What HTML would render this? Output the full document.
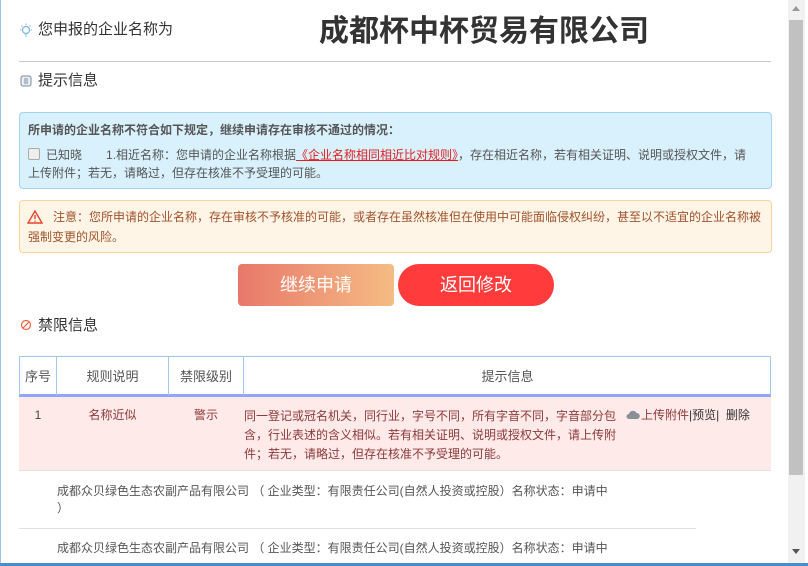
<!DOCTYPE html>
<html><head><meta charset="utf-8"><style>
*{margin:0;padding:0;box-sizing:border-box}
body{width:808px;height:566px;overflow:hidden;background:#fff;position:relative;font-family:"Liberation Sans","Noto Sans CJK SC","WenQuanYi Zen Hei",sans-serif;color:#333}
.a{position:absolute;white-space:nowrap}
.t{font-size:12px;line-height:17px;color:#555}
</style></head><body>
<div class="a" style="left:0;top:0;width:1px;height:566px;background:#9cc3e6"></div>
<div class="a" style="left:0;top:563px;width:808px;height:3px;background:#4a8ccc"></div>
<div class="a" style="left:788px;top:0;width:17px;height:563px;background:#f1f1f1"></div>
<div class="a" style="left:789px;top:20px;width:14px;height:455px;background:#c1c1c1"></div>
<div class="a" style="left:792px;top:6px;width:0;height:0;border-left:4px solid transparent;border-right:4px solid transparent;border-bottom:5px solid #999"></div>
<div class="a" style="left:792px;top:549px;width:0;height:0;border-left:4px solid transparent;border-right:4px solid transparent;border-top:5px solid #555"></div>

<svg class="a" style="left:19px;top:23px" width="14" height="16" viewBox="0 0 14 16"><circle cx="7" cy="7" r="3.5" fill="none" stroke="#7ab8e8" stroke-width="1.2"/><path d="M5.5 11h3M6 13h2M7 0.5v1.5M1 7h1.5M11.5 7H13M2.5 2.5l1 1M11.5 2.5l-1 1" stroke="#7ab8e8" stroke-width="1"/></svg>
<div class="a" style="left:38px;top:20px;font-size:15px;line-height:20px;color:#333">您申报的企业名称为</div>
<div class="a" style="left:319px;top:12px;font-size:30px;line-height:40px;font-weight:bold;color:#333">成都杯中杯贸易有限公司</div>
<div class="a" style="left:19px;top:61px;width:752px;height:1px;background:#c8c8c8"></div>
<svg class="a" style="left:20px;top:75px" width="12" height="12" viewBox="0 0 12 12"><rect x="1" y="1" width="10" height="10" rx="2" fill="#e8eef4" stroke="#7a8a9a"/><path d="M4 4h4M4 6h4M4 8h4" stroke="#7a8a9a"/></svg>
<div class="a" style="left:38px;top:70px;font-size:15px;line-height:21px;color:#333">提示信息</div>

<div class="a" style="left:19px;top:112px;width:753px;height:77px;background:#d9f1fc;border:1px solid #a2d4ef;border-radius:4px"></div>
<div class="a t" style="left:28px;top:122px;font-weight:bold;color:#555">所申请的企业名称不符合如下规定，继续申请存在审核不通过的情况：</div>
<div class="a" style="left:28px;top:148px;width:12px;height:12px;border:1px solid #aaa;border-radius:2px;background:#eee"></div>
<div class="a t" style="left:28px;top:146px;white-space:normal;width:726px;line-height:18px"><span style="margin-left:18px">已知晓</span><span style="margin-left:24px">1.相近名称：您申请的企业名称根据</span><span style="color:#e02020;text-decoration:underline">《企业名称相同相近比对规则》</span>，存在相近名称，若有相关证明、说明或授权文件，请上传附件；若无，请略过，但存在核准不予受理的可能。</div>

<div class="a" style="left:19px;top:200px;width:753px;height:53px;background:#fff5e6;border:1px solid #f8d59a;border-radius:4px"></div>
<svg class="a" style="left:27px;top:210px" width="16" height="14" viewBox="0 0 16 14"><path d="M8 1L15 13H1Z" fill="none" stroke="#e8432b" stroke-width="1.4"/><path d="M8 5v4M8 10.5v1.2" stroke="#e8432b" stroke-width="1.4"/></svg>
<div class="a" style="left:28px;top:207px;width:740px;white-space:normal;font-size:12px;line-height:20px;color:#a0522d;text-indent:25px">注意：您所申请的企业名称，存在审核不予核准的可能，或者存在虽然核准但在使用中可能面临侵权纠纷，甚至以不适宜的企业名称被强制变更的风险。</div>

<div class="a" style="left:238px;top:264px;width:156px;height:42px;border-radius:4px;background:linear-gradient(90deg,#e8786a,#f5bc84);color:#fff;font-size:18px;line-height:42px;text-align:center">继续申请</div>
<div class="a" style="left:398px;top:264px;width:156px;height:42px;border-radius:21px;background:#ff3b3b;color:#fff;font-size:18px;line-height:42px;text-align:center">返回修改</div>

<svg class="a" style="left:20px;top:319px" width="12" height="12" viewBox="0 0 12 12"><circle cx="6" cy="6" r="4.5" fill="none" stroke="#f06040" stroke-width="1.2"/><path d="M3 9L9 3" stroke="#f06040" stroke-width="1.2"/></svg>
<div class="a" style="left:38px;top:315px;font-size:15px;line-height:21px;color:#333">禁限信息</div>

<div class="a" style="left:19px;top:356px;width:752px;height:41px;border:1px solid #a8c8e8;border-bottom:3px solid #8fa5f8"></div>
<div class="a" style="left:56px;top:357px;width:1px;height:38px;background:#a8c8e8"></div>
<div class="a" style="left:168px;top:357px;width:1px;height:38px;background:#a8c8e8"></div>
<div class="a" style="left:243px;top:357px;width:1px;height:38px;background:#a8c8e8"></div>
<div class="a t" style="left:20px;top:368px;width:36px;text-align:center;font-size:13px">序号</div>
<div class="a t" style="left:57px;top:368px;width:111px;text-align:center;font-size:13px">规则说明</div>
<div class="a t" style="left:169px;top:368px;width:74px;text-align:center;font-size:13px">禁限级别</div>
<div class="a t" style="left:244px;top:368px;width:527px;text-align:center;font-size:13px">提示信息</div>

<div class="a" style="left:19px;top:397px;width:752px;height:74px;background:#ffeaea;border-bottom:1px solid #e0e0e0"></div>
<div class="a t" style="left:20px;top:407px;width:36px;text-align:center;color:#444">1</div>
<div class="a t" style="left:57px;top:407px;width:111px;text-align:center;color:#8b3a3a">名称近似</div>
<div class="a t" style="left:169px;top:407px;width:74px;text-align:center;color:#8b3a3a">警示</div>
<div class="a t" style="left:244px;top:407px;width:375px;white-space:normal;line-height:19px;color:#8b3a3a">同一登记或冠名机关，同行业，字号不同，所有字音不同，字音部分包含，行业表述的含义相似。若有相关证明、说明或授权文件，请上传附件；若无，请略过，但存在核准不予受理的可能。</div>
<svg class="a" style="left:626px;top:410px" width="14" height="10" viewBox="0 0 14 10"><path d="M3 9a2.5 2.5 0 0 1 0-5 4 4 0 0 1 7.5-1 3 3 0 0 1 0.5 6z" fill="#8a8f98"/></svg>
<div class="a t" style="left:641px;top:407px;color:#8b3a3a">上传附件<span style="color:#333">|预览| &nbsp;删除</span></div>

<div class="a t" style="left:57px;top:483px">成都众贝绿色生态农副产品有限公司 （ 企业类型：有限责任公司(自然人投资或控股）名称状态：申请中</div>
<div class="a t" style="left:57px;top:500px">）</div>
<div class="a" style="left:19px;top:528px;width:677px;height:1px;background:#e0e0e0"></div>
<div class="a t" style="left:57px;top:540px">成都众贝绿色生态农副产品有限公司 （ 企业类型：有限责任公司(自然人投资或控股）名称状态：申请中</div>
</body></html>
